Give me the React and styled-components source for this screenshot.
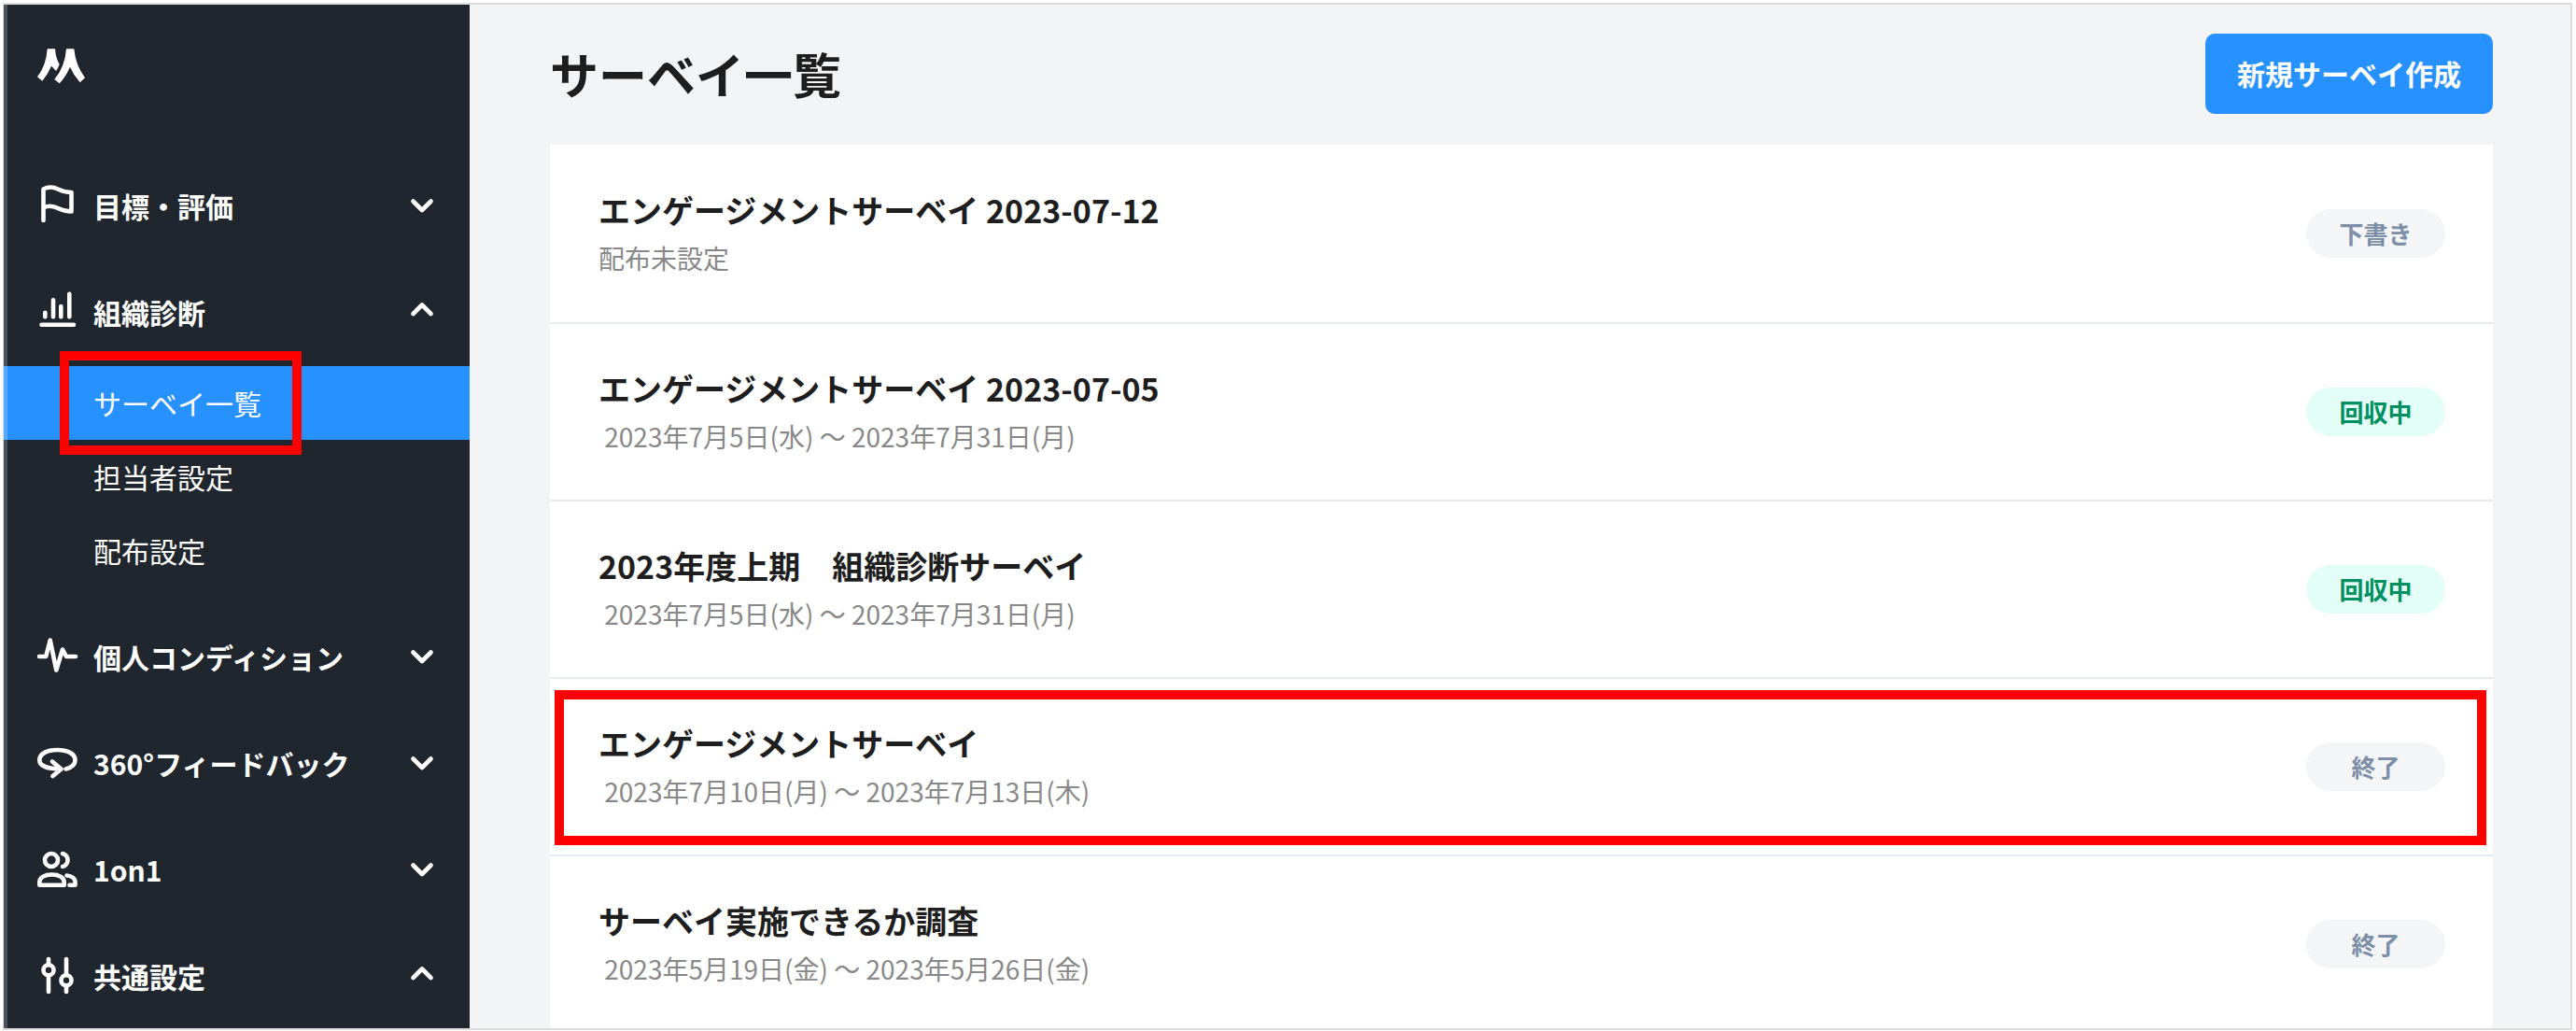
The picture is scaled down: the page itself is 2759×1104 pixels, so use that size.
import styled, { createGlobalStyle, css } from "styled-components";
import { useState } from "react";

const menuData = [
  { id: "goal", label: "目標・評価", icon: "flag" },
  {
    id: "diagnosis",
    label: "組織診断",
    icon: "bars",
    children: ["サーベイ一覧", "担当者設定", "配布設定"],
  },
  { id: "condition", label: "個人コンディション", icon: "pulse" },
  { id: "feedback", label: "360°フィードバック", icon: "rotate" },
  { id: "oneonone", label: "1on1", icon: "people" },
  { id: "common", label: "共通設定", icon: "sliders" },
];

const surveys = [
  {
    id: 1,
    title: "エンゲージメントサーベイ 2023-07-12",
    period: "配布未設定",
    status: "下書き",
  },
  {
    id: 2,
    title: "エンゲージメントサーベイ 2023-07-05",
    period: " 2023年7月5日(水) 〜 2023年7月31日(月)",
    status: "回収中",
  },
  {
    id: 3,
    title: "2023年度上期　組織診断サーベイ",
    period: " 2023年7月5日(水) 〜 2023年7月31日(月)",
    status: "回収中",
  },
  {
    id: 4,
    title: "エンゲージメントサーベイ",
    period: " 2023年7月10日(月) 〜 2023年7月13日(木)",
    status: "終了",
    marked: true,
  },
  {
    id: 5,
    title: "サーベイ実施できるか調査",
    period: " 2023年5月19日(金) 〜 2023年5月26日(金)",
    status: "終了",
  },
];

const icons = {
  flag: (
    <path d="M6.5 39V5.5C11 3 17 3 22 5.5S32 9 36.5 9V29.5C31 29.5 26 28 21.5 25.8S11 23 6.5 25.5" />
  ),
  bars: (
    <path d="M4.5 36.7H39M8.3 23.7V28.3M17 10.3V28.3M25.3 17V28.3M34.3 3.7V28.3" />
  ),
  pulse: <path d="M2 23H9.2L13.7 5.5L20.3 37.5L27 15.5L31 23H41" />,
  rotate: (
    <path d="M30.5 29.5C37 27.8 40.5 24.5 40.5 20C40.5 13 32 9 21.3 9S2.3 13 2.3 20C2.3 26 11 29.5 25.5 29.5M16 21.5L25.5 29.5L16.5 37" />
  ),
  people: (
    <>
      <circle cx="15" cy="13" r="7" />
      <path d="M27 6A7.2 7.2 0 0 1 27 20M2.3 39.7V36.5C2.3 31.5 8 28.5 15.5 28.5S28.7 31.5 28.7 36.5V39.7ZM31.5 29.5C37 30 40.5 33 40.5 36.5V39.7H34.5" />
    </>
  ),
  sliders: (
    <>
      <circle cx="12" cy="16.7" r="5.5" />
      <circle cx="31" cy="27.7" r="5.5" />
      <path d="M12 5V11M12 22.5V40M31 5V22M31 33.5V40" />
    </>
  ),
};

const Logo = () => (
  <svg width="52" height="40" viewBox="0 0 52 40" fill="#fff">
    <path d="M10.7 2.3H19Q19.5 12 23.7 19Q22.5 22.5 20 26L15 20.7Q11 30 5.3 36.7L0 32.3Q9.5 20 10.7 2.3Z" />
    <path d="M31 2.3H39.3Q41 20 51 33.3L45.7 38.3Q38.5 30 35 21.7Q30.5 32 23.7 39.3L18.3 35Q29.5 22 31 2.3Z" />
  </svg>
);

const App = () => {
  const [open, setOpen] = useState({ diagnosis: true, common: true });
  const [active, setActive] = useState("サーベイ一覧");

  // Handlers
  const toggle = (id) => setOpen((prev) => ({ ...prev, [id]: !prev[id] }));

  return (
    <>
      <GlobalStyle />
      <Frame>
        <Sidebar>
          <Brand href="#" aria-label="ホーム">
            <Logo />
          </Brand>
          <nav>
            {menuData.map(({ id, label, icon, children }) => (
              <div key={id}>
                <MenuButton
                  type="button"
                  aria-expanded={!!open[id]}
                  onClick={() => toggle(id)}
                >
                  <Icon viewBox="0 0 44 44">{icons[icon]}</Icon>
                  <span>{label}</span>
                  <Chevron viewBox="0 0 28 28">
                    {open[id] ? (
                      <path d="M4.5 17L14 7.5L23.5 17" />
                    ) : (
                      <path d="M4.5 10.5L14 20L23.5 10.5" />
                    )}
                  </Chevron>
                </MenuButton>
                {children && open[id] && (
                  <SubMenu>
                    {children.map((name) => (
                      <li key={name}>
                        <SubLink
                          href="#"
                          $active={name === active}
                          onClick={() => setActive(name)}
                        >
                          {name}
                          {name === active && <SubMarker />}
                        </SubLink>
                      </li>
                    ))}
                  </SubMenu>
                )}
              </div>
            ))}
          </nav>
        </Sidebar>
        <Main>
          <Header>
            <h1>サーベイ一覧</h1>
            <CreateButton type="button">新規サーベイ作成</CreateButton>
          </Header>
          <List>
            {surveys.map(({ id, title, period, status, marked }) => (
              <Row key={id}>
                <div>
                  <h2>{title}</h2>
                  <p>{period}</p>
                </div>
                <Badge $running={status === "回収中"}>{status}</Badge>
                {marked && <RowMarker />}
              </Row>
            ))}
          </List>
        </Main>
      </Frame>
    </>
  );
};

const GlobalStyle = createGlobalStyle`
  * {
    box-sizing: border-box;
    margin: 0;
    padding: 0;
  }

  body {
    background: #fff;
    font-family: "Noto Sans CJK JP", sans-serif;
    color: #1e1e1e;
  }

  button {
    font-family: inherit;
    border: none;
    cursor: pointer;
  }

  a {
    color: inherit;
    text-decoration: none;
  }
`;

const Frame = styled.div`
  display: flex;
  height: calc(100vh - 4px);
  margin: 3px 4px 0 3px;
  border: 2px solid #dcdcdc;
  border-left-width: 1px;
  overflow: hidden;
  background: #f3f4f6;
`;

const Sidebar = styled.aside`
  flex: 0 0 499px;
  background: #20262e;
  box-shadow: inset 4px 0 #4b515a;
  color: #fff;
`;

const Brand = styled.a`
  display: block;
  height: 157px;
  padding: 45px 36px 0;

  svg {
    display: block;
  }
`;

const stroke = css`
  fill: none;
  stroke: #fff;
  stroke-width: 4.6;
  stroke-linecap: round;
  stroke-linejoin: round;
`;

const Icon = styled.svg`
  width: 44px;
  height: 44px;
  ${stroke}
`;

const Chevron = styled.svg`
  width: 28px;
  height: 28px;
  margin-left: auto;
  ${stroke}
`;

const MenuButton = styled.button`
  display: flex;
  align-items: center;
  gap: 16px;
  width: 100%;
  height: 114px;
  padding: 0 37px 0 36px;
  background: none;
  color: #fff;
  font-size: 30px;
  font-weight: 700;

  span {
    padding-top: 2px;
    line-height: 44px;
  }
`;

const SubMenu = styled.ul`
  list-style: none;
  padding: 2px 0 16px;
`;

const SubLink = styled.a`
  position: relative;
  display: block;
  padding-left: 96px;
  font-size: 30px;
  line-height: 79px;
  background: ${({ $active }) => ($active ? "#2792ff" : "none")};
  box-shadow: ${({ $active }) => ($active ? "inset 4px 0 #59abff" : "none")};
`;

const marker = css`
  position: absolute;
  border: 10px solid #ff0000;
  pointer-events: none;
`;

const SubMarker = styled.span`
  ${marker}
  top: -16px;
  bottom: -16px;
  left: 60px;
  width: 259px;
  z-index: 1;
`;

const Main = styled.main`
  flex: 1;
  min-width: 0;
  padding: 0 83px 0 86px;
`;

const Header = styled.header`
  display: flex;
  align-items: center;
  justify-content: space-between;
  padding: 31px 0 33px;

  h1 {
    font-size: 52px;
    font-weight: 700;
    line-height: 76px;
  }
`;

const CreateButton = styled.button`
  padding: 20px 34px 22px;
  border-radius: 10px;
  background: #2792ff;
  color: #fff;
  font-size: 30px;
  font-weight: 700;
  line-height: 44px;
`;

const List = styled.ul`
  list-style: none;
  background: #fff;
`;

const Row = styled.li`
  position: relative;
  display: flex;
  align-items: center;
  justify-content: space-between;
  height: 190px;
  padding: 0 51px 0 52px;

  & + & {
    border-top: 2px solid #e5eaef;
  }

  h2 {
    font-size: 34px;
    font-weight: 700;
    line-height: 56px;
  }

  p {
    padding-bottom: 4px;
    color: #888;
    font-size: 28px;
    line-height: 47px;
    white-space: pre;
  }
`;

const Badge = styled.span`
  min-width: 149px;
  border-radius: 26px;
  background: ${({ $running }) => ($running ? "#e3fef6" : "#f3f5f7")};
  color: ${({ $running }) => ($running ? "#008f60" : "#7d8fa6")};
  font-size: 26px;
  font-weight: 700;
  line-height: 52px;
  text-align: center;
`;

const RowMarker = styled.span`
  ${marker}
  top: 12px;
  right: 7px;
  bottom: 10px;
  left: 5px;
`;

export default App;
